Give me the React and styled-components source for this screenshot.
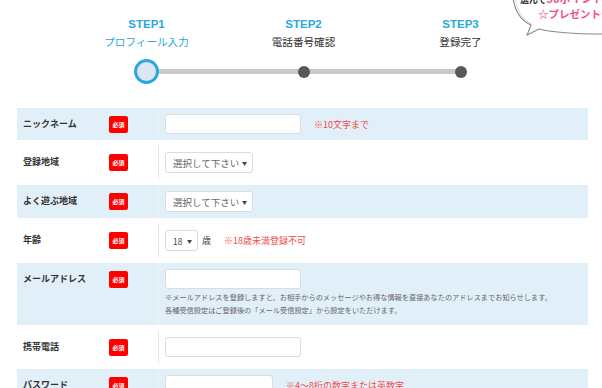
import React from 'react';
import styled, { createGlobalStyle } from 'styled-components';

const GlobalStyle = createGlobalStyle`
  html, body {
    margin: 0;
    padding: 0;
    background: #fff;
  }
  body {
    font-family: "Noto Sans CJK JP", "Noto Sans", sans-serif;
    color: #333;
    overflow: hidden;
  }
`;

const steps = [
  { no: 'STEP1', label: 'プロフィール入力', active: true },
  { no: 'STEP2', label: '電話番号確認' },
  { no: 'STEP3', label: '登録完了' },
];

const App = () => {
  return (
    <>
      <GlobalStyle />
      <Page>
        <Bubble>
          <svg width="92" height="40" viewBox="510 0 92 40">
            <path
              d="M513 -2 C515 12 522 21 531 25 L527 35 L539 29 C556 33 580 34 604 34 L604 -2 Z"
              fill="#fff"
              stroke="#8a8a8a"
              strokeWidth="1.1"
            />
            <path
              d="M515 -2 C517 11 523 20 532 24"
              fill="none"
              stroke="#cfcfcf"
              strokeWidth="0.8"
            />
          </svg>
          <BubbleText>
            <BubbleLine $left={10} $top={-9}>
              選んで<Pink $size={11}>50ポイント</Pink>
            </BubbleLine>
            <BubbleLine $left={28} $top={7}>
              <Pink $size={10.5}>☆プレゼント☆</Pink>
            </BubbleLine>
          </BubbleText>
        </Bubble>

        <Steps>
          {steps.map((s, i) => (
            <Step key={s.no}>
              <StepNo>{s.no}</StepNo>
              <StepLabel $active={s.active}>{s.label}</StepLabel>
              <Track $first={i === 0} $last={i === steps.length - 1}>
                {s.active ? <BigDot /> : <Dot />}
              </Track>
            </Step>
          ))}
        </Steps>

        <Table>
          <Row $shaded>
            <LabelCell $shaded>
              <Label>ニックネーム</Label>
              <Badge>必須</Badge>
            </LabelCell>
            <ValueCell>
              <Line>
                <Input $w={136} />
                <Note>※10文字まで</Note>
              </Line>
            </ValueCell>
          </Row>

          <Row>
            <LabelCell>
              <Label>登録地域</Label>
              <Badge>必須</Badge>
            </LabelCell>
            <ValueCell>
              <Line>
                <Select $w={88}>
                  選択して下さい<Caret>▼</Caret>
                </Select>
              </Line>
            </ValueCell>
          </Row>

          <Row $shaded>
            <LabelCell $shaded>
              <Label>よく遊ぶ地域</Label>
              <Badge>必須</Badge>
            </LabelCell>
            <ValueCell>
              <Line>
                <Select $w={88}>
                  選択して下さい<Caret>▼</Caret>
                </Select>
              </Line>
            </ValueCell>
          </Row>

          <Row>
            <LabelCell>
              <Label>年齢</Label>
              <Badge>必須</Badge>
            </LabelCell>
            <ValueCell>
              <Line>
                <Select $w={33} $dark>
                  18<Caret>▼</Caret>
                </Select>
                <Unit>歳</Unit>
                <Note>※18歳未満登録不可</Note>
              </Line>
            </ValueCell>
          </Row>

          <Row $shaded>
            <LabelCell $shaded>
              <Label>メールアドレス</Label>
              <Badge>必須</Badge>
            </LabelCell>
            <ValueCell>
              <Input $w={136} />
              <Small>
                ※メールアドレスを登録しますと、お相手からのメッセージやお得な情報を直接あなたのアドレスまでお知らせします。
                <br />
                各種受信設定はご登録後の「メール受信設定」から設定をいただけます。
              </Small>
            </ValueCell>
          </Row>

          <Row>
            <LabelCell>
              <Label>携帯電話</Label>
              <Badge>必須</Badge>
            </LabelCell>
            <ValueCell>
              <Line>
                <Input $w={136} />
              </Line>
            </ValueCell>
          </Row>

          <Row $shaded>
            <LabelCell $shaded>
              <Label>パスワード</Label>
              <Badge>必須</Badge>
            </LabelCell>
            <ValueCell>
              <Line>
                <Input $w={108} />
                <Note>※4～8桁の数字または英数字</Note>
              </Line>
            </ValueCell>
          </Row>
        </Table>
      </Page>
    </>
  );
};

const Page = styled.div`
  position: relative;
  width: 602px;
  height: 388px;
  overflow: hidden;
`;

const Bubble = styled.div`
  position: absolute;
  top: 0;
  right: 0;
  width: 92px;
  height: 40px;
  overflow: hidden;

  svg {
    display: block;
  }
`;

const BubbleText = styled.div`
  position: absolute;
  top: 0;
  left: 0;
  right: 0;
  bottom: 0;
`;

const BubbleLine = styled.div`
  position: absolute;
  left: ${(p) => p.$left}px;
  top: ${(p) => p.$top}px;
  white-space: nowrap;
  font-size: 9px;
  font-weight: 700;
  color: #333;
  line-height: 14px;
`;

const Pink = styled.span`
  color: #f2508a;
  font-size: ${(p) => p.$size}px;
  font-weight: 700;
`;

const Steps = styled.div`
  display: grid;
  grid-template-columns: repeat(3, 157px);
  margin-left: 68px;
  padding-top: 17px;
`;

const Step = styled.div`
  display: flex;
  flex-direction: column;
  align-items: center;
`;

const StepNo = styled.div`
  font-family: "Liberation Sans", Arial, sans-serif;
  font-weight: 700;
  font-size: 11.5px;
  line-height: 14px;
  color: #2aa7dd;
`;

const StepLabel = styled.div`
  margin-top: 3px;
  font-size: 10.6px;
  line-height: 16px;
  color: ${(p) => (p.$active ? '#2aa7dd' : '#333')};
`;

const Track = styled.div`
  position: relative;
  width: 100%;
  height: 25px;
  margin-top: 9px;
  display: flex;
  align-items: center;
  justify-content: center;

  &::before {
    content: '';
    position: absolute;
    top: 10px;
    height: 5px;
    left: ${(p) => (p.$first ? '50%' : '0')};
    right: ${(p) => (p.$last ? '50%' : '0')};
    background: #c9c9c9;
  }
`;

const BigDot = styled.span`
  position: relative;
  box-sizing: border-box;
  width: 25px;
  height: 25px;
  border-radius: 50%;
  border: 3.5px solid #2aa7dd;
  background: #dce7f3;
`;

const Dot = styled.span`
  position: relative;
  width: 12px;
  height: 12px;
  border-radius: 50%;
  background: #585858;
`;

const Table = styled.div`
  margin: 24px 0 0 17px;
  width: 571px;
`;

const Row = styled.div`
  display: grid;
  grid-template-columns: 142px 1fr;
  background: ${(p) => (p.$shaded ? '#e1eff8' : '#fff')};
  padding: ${(p) => (p.$shaded ? '0' : '6px 0')};
`;

const LabelCell = styled.div`
  display: flex;
  align-items: flex-start;
  padding: 6px 0 6px 6px;
  border-right: 1px solid ${(p) => (p.$shaded ? '#eef6fb' : '#e6e6e6')};
`;

const Label = styled.div`
  width: 86px;
  font-size: 9px;
  font-weight: 700;
  line-height: 20px;
  color: #333;
  white-space: nowrap;
`;

const Badge = styled.span`
  margin-top: 2px;
  width: 19px;
  height: 17px;
  border-radius: 2px;
  background: #ff0000;
  color: #fff;
  font-size: 6px;
  font-weight: 700;
  display: flex;
  align-items: center;
  justify-content: center;
`;

const ValueCell = styled.div`
  padding: 6px 0 6px 6px;
  min-width: 0;
`;

const Line = styled.div`
  display: flex;
  align-items: center;
  gap: 13px;
  min-height: 20px;
`;

const Input = styled.div`
  box-sizing: border-box;
  width: ${(p) => p.$w}px;
  height: 20px;
  background: #fff;
  border: 1px solid #dcdcdc;
  border-radius: 3px;
`;

const Select = styled.div`
  box-sizing: border-box;
  width: ${(p) => p.$w}px;
  height: 21px;
  padding: 0 5px 0 7px;
  background: #fff;
  border: 1px solid #dcdcdc;
  border-radius: 3px;
  display: flex;
  align-items: center;
  justify-content: space-between;
  font-size: ${(p) => (p.$dark ? 8.5 : 9.5)}px;
  color: ${(p) => (p.$dark ? '#444' : '#666')};
  white-space: nowrap;
`;

const Caret = styled.span`
  font-size: 5px;
  color: #444;
`;

const Unit = styled.span`
  margin-left: -9px;
  font-size: 9px;
  color: #444;
`;

const Note = styled.span`
  font-size: 9px;
  color: #f24a4a;
  white-space: nowrap;
`;

const Small = styled.div`
  margin-top: 2px;
  padding-bottom: 2px;
  font-size: 7.2px;
  line-height: 13px;
  color: #666;
  white-space: nowrap;
`;

export default App;
